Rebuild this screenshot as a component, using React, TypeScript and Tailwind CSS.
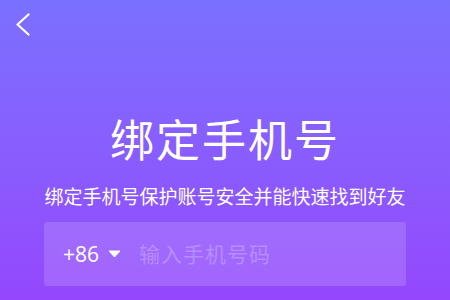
export default function App() {
  return (
    <div
      className="flex h-[300px] w-[450px] flex-col overflow-hidden bg-gradient-to-b from-[#7a70fe] to-[#9447fd] text-white"
      style={{ fontFamily: '"Noto Sans CJK SC", "Noto Sans", sans-serif' }}
    >
      <div className="h-[116px] pl-[15px] pt-[13px]">
        <svg width="15" height="23" viewBox="0 0 15 23" fill="none">
          <path d="M13.5 1.5 L2.5 11.5 L13.5 21.5" stroke="white" strokeWidth="2.2" strokeLinecap="round" strokeLinejoin="round" />
        </svg>
      </div>
      <h1 className="text-center text-[44px] font-normal leading-none tracking-[2px]">绑定手机号</h1>
      <p className="mt-[26px] text-center text-[19px] leading-none">绑定手机号保护账号安全并能快速找到好友</p>
      <div className="mx-[44px] mt-[17px] flex h-[64px] items-center rounded-[3px] bg-white/15 pl-[19px]">
        <button className="flex items-center gap-[9px] text-[21px] leading-none" style={{ fontFamily: '"Open Sans", "Noto Sans", sans-serif' }}>
          +86
          <svg width="13" height="8" viewBox="0 0 13 8">
            <path d="M1 1 L12 1 L6.5 7 Z" fill="white" stroke="white" strokeWidth="1" strokeLinejoin="round" />
          </svg>
        </button>
        <input
          className="ml-[18px] min-w-0 flex-1 bg-transparent text-[21px] tracking-[1px] text-white outline-none placeholder:text-white/25"
          placeholder="输入手机号码"
        />
      </div>
    </div>
  );
}
